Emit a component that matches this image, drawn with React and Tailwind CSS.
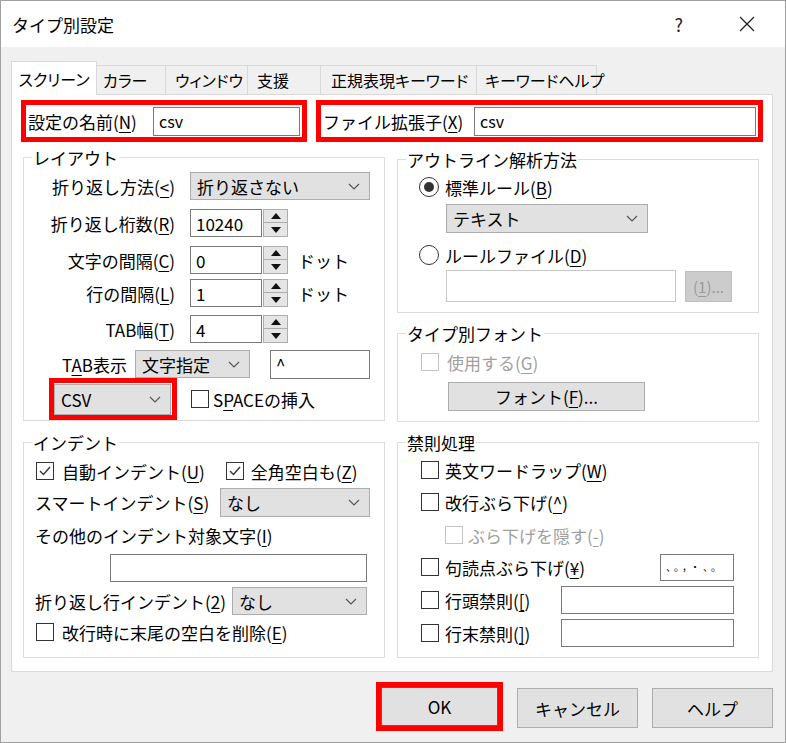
import React from "react";

const U = ({ children }) => <span className="underline underline-offset-[3px]">{children}</span>;

const Chevron = () => (
  <svg width="12" height="7" viewBox="0 0 12 7" className="shrink-0">
    <polyline points="1,1 6,6 11,1" fill="none" stroke="#555" strokeWidth="1.2" />
  </svg>
);

const Select = ({ value, className = "" }) => (
  <div className={`flex items-center border border-[#adadad] bg-[#e1e1e1] pl-[6px] pr-[9px] ${className}`}>
    <span className="flex-1">{value}</span>
    <Chevron />
  </div>
);

const Input = ({ value, className = "" }) => (
  <div className={`flex items-center border border-[#7a7a7a] bg-white px-[5px] ${className}`}>{value}</div>
);

const Spin = () => (
  <div className="ml-px flex h-[28px] w-[25px] flex-col">
    <div className="flex h-[14px] items-center justify-center border border-[#adadad] bg-[#e5e5e5]">
      <svg width="10" height="6" viewBox="0 0 10 6">
        <polygon points="0,6 5,0 10,6" fill="#111" />
      </svg>
    </div>
    <div className="flex h-[14px] items-center justify-center border border-t-0 border-[#adadad] bg-[#e5e5e5]">
      <svg width="10" height="6" viewBox="0 0 10 6">
        <polygon points="0,0 10,0 5,6" fill="#111" />
      </svg>
    </div>
  </div>
);

const Check = ({ checked, disabled }) => (
  <div
    className={`flex h-[18px] w-[18px] shrink-0 items-center justify-center border bg-white ${
      disabled ? "border-[#c4c4c4]" : "border-[#333]"
    }`}
  >
    {checked && (
      <svg width="14" height="14" viewBox="0 0 14 14">
        <polyline points="2,7 5.5,10.5 12,3" fill="none" stroke="#333" strokeWidth="1.4" />
      </svg>
    )}
  </div>
);

const Radio = ({ checked }) => (
  <div className="flex h-[20px] w-[20px] shrink-0 items-center justify-center rounded-full border border-[#333] bg-white">
    {checked && <div className="h-[10px] w-[10px] rounded-full bg-[#333]" />}
  </div>
);

const Group = ({ title, className = "", children }) => (
  <div className={`flex flex-col border border-[#dcdcdc] ${className}`}>
    <div className="-mt-[13px] flex h-[24px] items-center pl-[8px]">
      <span className="bg-white px-px">{title}</span>
    </div>
    {children}
  </div>
);

const Button = ({ children, className = "" }) => (
  <div className={`flex items-center justify-center border border-[#adadad] bg-[#e1e1e1] ${className}`}>{children}</div>
);

const tabs = [
  { label: "カラー", cls: "w-[70px] pl-[6px]" },
  { label: "ウィンドウ", cls: "w-[83px] pl-[9px]" },
  { label: "支援", cls: "w-[74px] pl-[9px]" },
  { label: "正規表現キーワード", cls: "w-[157px] pl-[10px]" },
  { label: "キーワードヘルプ", cls: "w-[121px] pl-[8px]" },
];

const SpinRow = ({ label, value, unit, className = "" }) => (
  <div className={`flex h-[28px] items-center ${className}`}>
    <div className="w-[151px] text-right">{label}</div>
    <Input value={value} className="ml-[15px] h-[28px] w-[72px]" />
    <Spin />
    {unit && <span className="ml-[10px]">{unit}</span>}
  </div>
);

export default function App() {
  return (
    <div className="flex h-[743px] w-[786px] flex-col overflow-hidden border border-[#a0a0a0] bg-[#f0f0f0] font-['Noto_Sans_CJK_JP','Noto_Sans',sans-serif] text-[17px] leading-none whitespace-nowrap text-black">
      {/* title bar */}
      <div className="flex h-[46px] shrink-0 items-center bg-white">
        <span className="ml-[11px]">タイプ別設定</span>
        <span className="ml-auto text-[18px] text-[#222]">?</span>
        <svg width="16" height="16" viewBox="0 0 16 16" className="ml-[56px] mr-[30px]">
          <line x1="1" y1="1" x2="15" y2="15" stroke="#222" strokeWidth="1.3" />
          <line x1="15" y1="1" x2="1" y2="15" stroke="#222" strokeWidth="1.3" />
        </svg>
      </div>

      <div className="flex flex-1 flex-col pl-[10px] pr-[12px]">
        {/* tabs */}
        <div className="mt-[14px] flex h-[33px] items-end text-[16px] [font-feature-settings:'palt']">
          <div className="relative z-10 -mb-px flex h-[34px] w-[86px] items-center justify-center border border-b-0 border-[#d9d9d9] bg-white">
            スクリーン
          </div>
          {tabs.map((t) => (
            <div
              key={t.label}
              className={`-ml-px flex h-[29px] items-center border border-b-0 border-[#d9d9d9] bg-[#f0f0f0] ${t.cls}`}
            >
              {t.label}
            </div>
          ))}
        </div>

        {/* tab panel */}
        <div className="flex h-[578px] w-[762px] flex-col border border-[#d9d9d9] bg-white">
          <div className="ml-[9px] mt-[5px] flex gap-[9px]">
            <div className="flex h-[42px] w-[286px] items-center border-[5px] border-[#ff0000] px-[2px]">
              <span>
                設定の名前(<U>N</U>)
              </span>
              <Input value="csv" className="ml-auto h-[29px] w-[147px] text-[16px]" />
            </div>
            <div className="flex h-[42px] w-[447px] items-center border-[5px] border-[#ff0000] px-[2px]">
              <span>
                ファイル拡張子(<U>X</U>)
              </span>
              <Input value="csv" className="ml-auto h-[29px] w-[282px] text-[16px]" />
            </div>
          </div>

          <div className="ml-[11px] mt-[15px] flex gap-[12px]">
            {/* left column */}
            <div className="flex w-[362px] flex-col">
              <Group title="レイアウト" className="h-[264px]">
                <div className="mt-[3px] flex h-[28px] items-center">
                  <div className="w-[151px] text-right">
                    折り返し方法(<U>&lt;</U>)
                  </div>
                  <Select value="折り返さない" className="ml-[15px] h-[28px] w-[180px]" />
                </div>
                <SpinRow className="mt-[9px]" label={<>折り返し桁数(<U>R</U>)</>} value="10240" />
                <SpinRow className="mt-[9px]" label={<>文字の間隔(<U>C</U>)</>} value="0" unit="ドット" />
                <SpinRow className="mt-[5px]" label={<>行の間隔(<U>L</U>)</>} value="1" unit="ドット" />
                <SpinRow className="mt-[8px]" label={<>TAB幅(<U>T</U>)</>} value="4" />
                <div className="mt-[7px] flex h-[28px] items-center">
                  <div className="w-[103px] text-right">
                    T<U>A</U>B表示
                  </div>
                  <Select value="文字指定" className="ml-[8px] h-[28px] w-[115px]" />
                  <Input value="^" className="ml-[20px] h-[29px] w-[100px]" />
                </div>
                <div className="flex h-[42px] items-center">
                  <div className="ml-[25px] flex h-[42px] w-[128px] items-center border-[5px] border-[#ff0000]">
                    <Select value="CSV" className="h-[31px] w-[117px]" />
                  </div>
                  <div className="ml-[14px]">
                    <Check />
                  </div>
                  <span className="ml-[4px]">
                    S<U>P</U>ACEの挿入
                  </span>
                </div>
              </Group>

              <Group title="インデント" className="mt-[21px] h-[216px]">
                <div className="mt-[3px] flex h-[28px] items-center pl-[12px]">
                  <Check checked />
                  <span className="ml-[8px]">
                    自動インデント(<U>U</U>)
                  </span>
                  <div className="ml-[21px]">
                    <Check checked />
                  </div>
                  <span className="ml-[7px]">
                    全角空白も(<U>Z</U>)
                  </span>
                </div>
                <div className="mt-[3px] flex h-[29px] items-center pl-[11px]">
                  <span>
                    スマートインデント(<U>S</U>)
                  </span>
                  <Select value="なし" className="ml-auto mr-[14px] h-[29px] w-[150px]" />
                </div>
                <div className="mt-[6px] flex h-[24px] items-center pl-[11px]">
                  その他のインデント対象文字(<U>I</U>)
                </div>
                <Input className="ml-[86px] mt-[7px] h-[28px] w-[257px]" />
                <div className="mt-[5px] flex h-[28px] items-center pl-[11px]">
                  <span>
                    折り返し行インデント(<U>2</U>)
                  </span>
                  <Select value="なし" className="ml-auto mr-[17px] h-[28px] w-[135px]" />
                </div>
                <div className="mt-[3px] flex h-[28px] items-center pl-[12px]">
                  <Check />
                  <span className="ml-[8px]">
                    改行時に末尾の空白を削除(<U>E</U>)
                  </span>
                </div>
              </Group>
            </div>

            {/* right column */}
            <div className="mt-[2px] flex w-[362px] flex-col">
              <Group title="アウトライン解析方法" className="h-[154px]">
                <div className="mt-[2px] flex h-[28px] items-center pl-[21px]">
                  <Radio checked />
                  <span className="ml-[6px]">
                    標準ルール(<U>B</U>)
                  </span>
                </div>
                <Select value="テキスト" className="ml-[48px] mt-[3px] h-[29px] w-[202px]" />
                <div className="mt-[8px] flex h-[28px] items-center pl-[21px]">
                  <Radio />
                  <span className="ml-[6px]">
                    ルールファイル(<U>D</U>)
                  </span>
                </div>
                <div className="mt-px flex items-center pl-[48px]">
                  <Input className="h-[32px] w-[230px] border-[#c8c8c8]" />
                  <div className="ml-[9px] flex h-[31px] w-[47px] items-center justify-center border border-[#bfbfbf] bg-[#cccccc] text-[15px] text-[#9a9a9a]">
                    (<U>1</U>)...
                  </div>
                </div>
              </Group>

              <Group title="タイプ別フォント" className="mt-[20px] h-[89px]">
                <div className="mt-[5px] flex h-[24px] items-center pl-[23px] text-[#a0a0a0]">
                  <Check disabled />
                  <span className="ml-[8px]">
                    使用する(<U>G</U>)
                  </span>
                </div>
                <Button className="ml-[50px] mt-[8px] h-[29px] w-[197px]">
                  フォント(<U>F</U>)...
                </Button>
              </Group>

              <Group title="禁則処理" className="mt-[20px] h-[216px]">
                <div className="mt-[2px] flex h-[28px] items-center pl-[23px]">
                  <Check />
                  <span className="ml-[6px]">
                    英文ワードラップ(<U>W</U>)
                  </span>
                </div>
                <div className="mt-[4px] flex h-[28px] items-center pl-[23px]">
                  <Check />
                  <span className="ml-[6px]">
                    改行ぶら下げ(<U>^</U>)
                  </span>
                </div>
                <div className="mt-[5px] flex h-[28px] items-center pl-[47px] text-[#a0a0a0]">
                  <Check disabled />
                  <span className="ml-[5px]">
                    ぶら下げを隠す(<U>-</U>)
                  </span>
                </div>
                <div className="mt-[4px] flex h-[28px] items-center pl-[23px]">
                  <Check />
                  <span className="ml-[6px]">
                    句読点ぶら下げ(<U>¥</U>)
                  </span>
                  <Input
                    value="、。，・、。"
                    className="ml-auto mr-[24px] h-[27px] w-[74px] px-[2px] text-[10px] tracking-[3px]"
                  />
                </div>
                <div className="mt-[5px] flex h-[28px] items-center pl-[23px]">
                  <Check />
                  <span className="ml-[6px]">
                    行頭禁則(<U>[</U>)
                  </span>
                  <Input className="ml-auto mr-[24px] h-[28px] w-[173px]" />
                </div>
                <div className="mt-[5px] flex h-[28px] items-center pl-[23px]">
                  <Check />
                  <span className="ml-[6px]">
                    行末禁則(<U>]</U>)
                  </span>
                  <Input className="ml-auto mr-[24px] h-[28px] w-[173px]" />
                </div>
              </Group>
            </div>
          </div>
        </div>

        {/* buttons */}
        <div className="mt-[10px] flex items-start justify-end">
          <div className="flex h-[49px] w-[127px] border-[5px] border-[#ff0000]">
            <div className="flex flex-1 items-center justify-center border border-[#0078d7] bg-[#e1e1e1]">OK</div>
          </div>
          <Button className="ml-[14px] mt-[6px] h-[40px] w-[121px]">キャンセル</Button>
          <Button className="ml-[14px] mt-[6px] h-[40px] w-[121px]">ヘルプ</Button>
        </div>
      </div>
    </div>
  );
}
